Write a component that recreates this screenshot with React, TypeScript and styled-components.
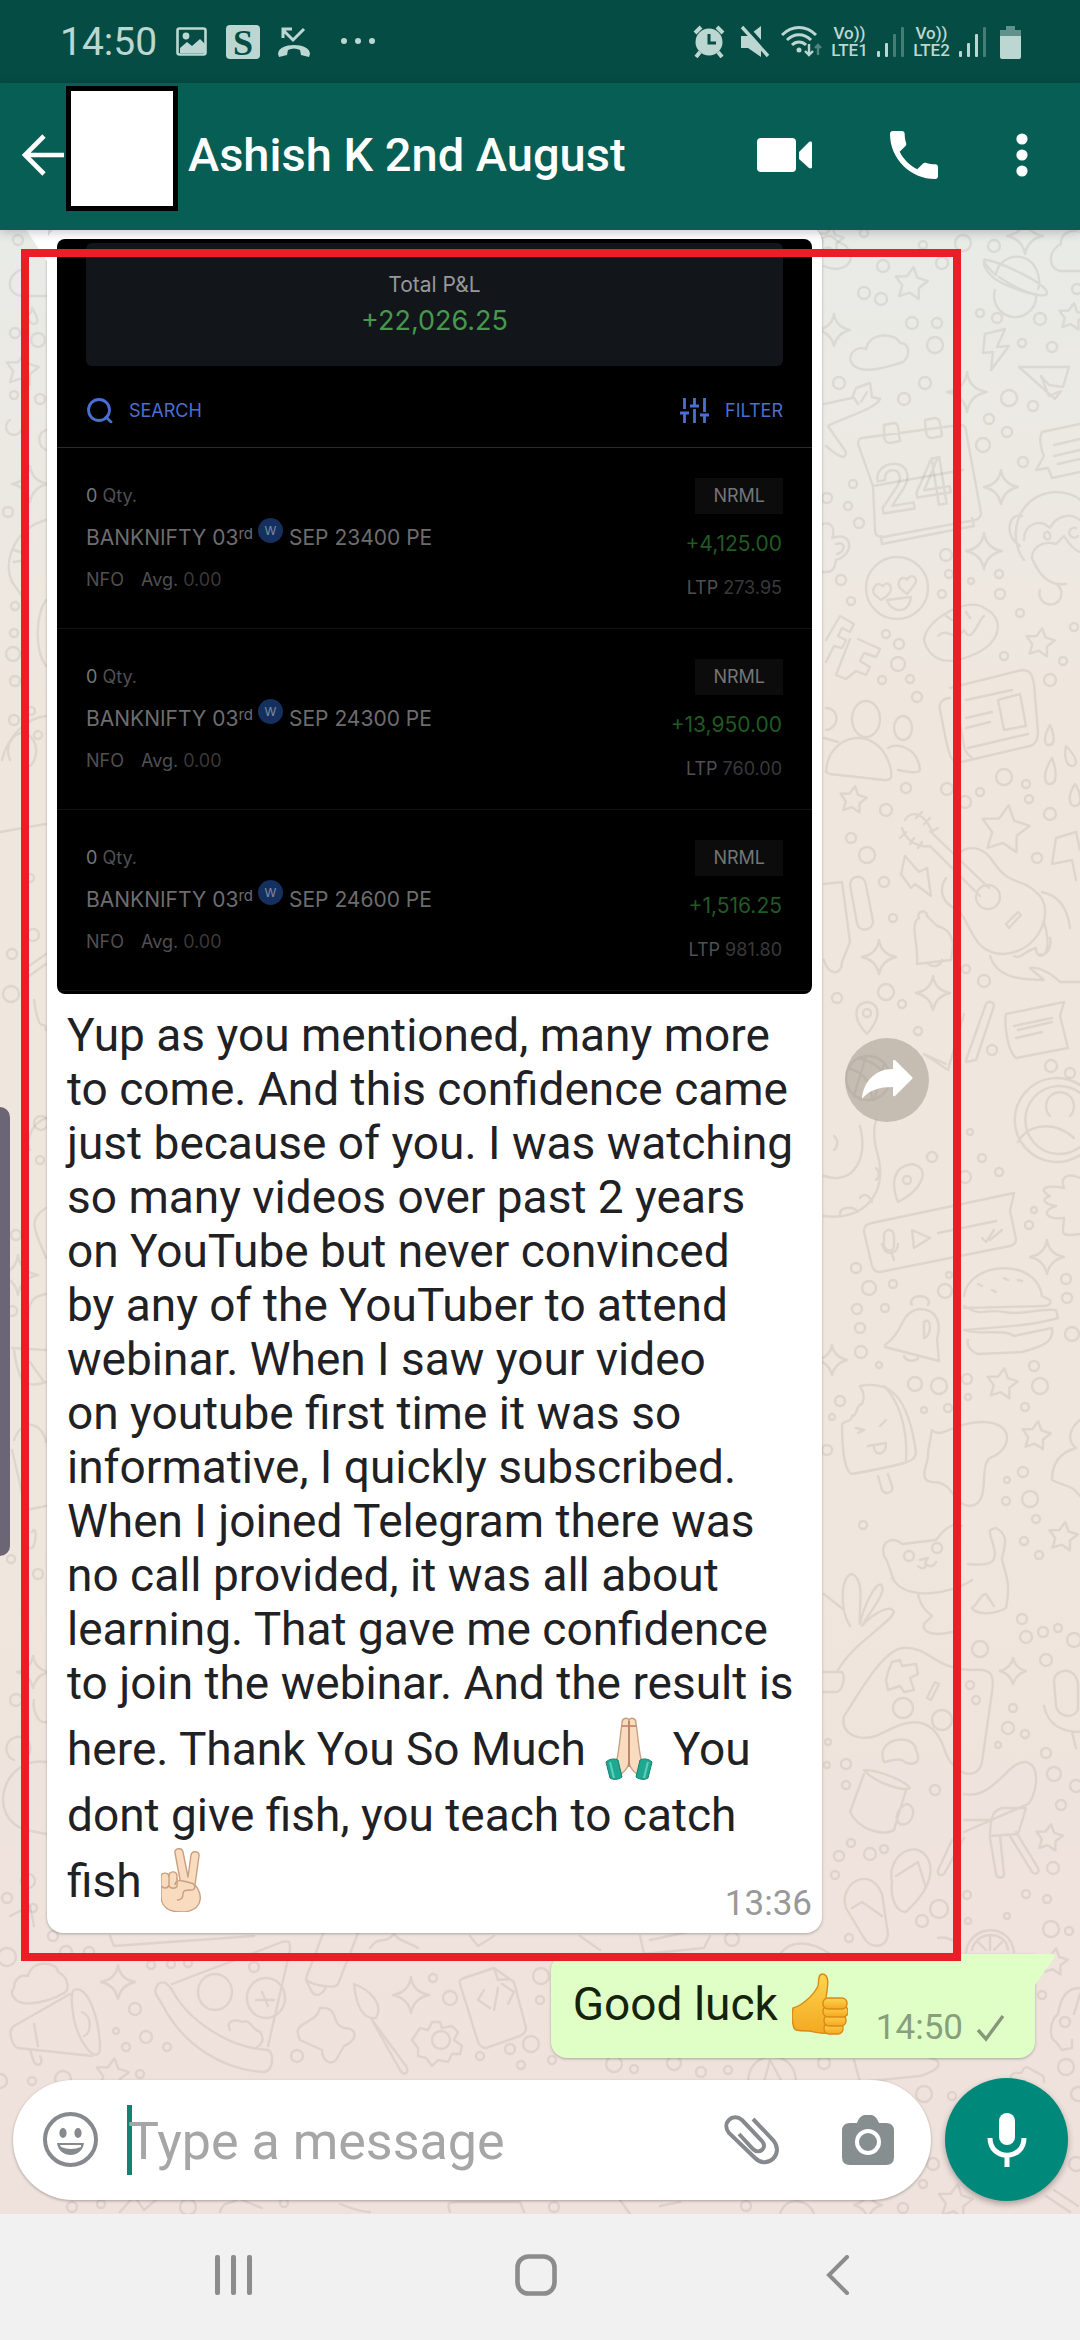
import React from 'react';
import styled, { createGlobalStyle } from 'styled-components';

const GlobalStyle = createGlobalStyle`
  * { box-sizing: border-box; }
  body { margin: 0; background: #f1f1f1; }
  button { border: 0; padding: 0; background: none; font: inherit; color: inherit; cursor: pointer; display: flex; flex: none; }
  svg { display: block; }
`;

const Screen = styled.div`
  min-height: 100vh;
  display: flex;
  flex-direction: column;
  font-family: Roboto, "Noto Sans", sans-serif;
`;

/* ---------- status bar ---------- */
const StatusBar = styled.div`
  height: 83px;
  padding: 0 59px 0 60px;
  display: flex;
  align-items: center;
  justify-content: space-between;
  background: #054d44;
  color: #bcd6d2;
`;
const StatusGroup = styled.div<{ $gap: number }>`
  display: flex;
  align-items: center;
  gap: ${(p) => p.$gap}px;
`;
const Clock = styled.span`
  font-size: 39px;
  line-height: 44px;
`;
const Network = styled.span`
  width: 39px;
  display: flex;
  flex-direction: column;
  align-items: center;
  font-size: 17px;
  line-height: 17px;
  font-weight: 500;
`;

/* ---------- chat header ---------- */
const Header = styled.header`
  position: relative;
  z-index: 2;
  height: 147px;
  padding: 3px 52px 7px 22px;
  display: flex;
  align-items: center;
  background: #075e54;
  color: #fff;
  box-shadow: 0 2px 10px rgba(0, 0, 0, 0.22);
`;
const Avatar = styled.div`
  align-self: flex-start;
  width: 112px;
  height: 125px;
  margin: 0 10px 0 2px;
  border: 5px solid #000;
  background: #fff;
`;
const Title = styled.h1`
  flex: 1;
  margin: 0;
  font-size: 47px;
  line-height: 56px;
  font-weight: 500;
  white-space: nowrap;
`;
const HeaderActions = styled.div`
  display: flex;
  align-items: center;
  gap: 78px;
`;

/* ---------- conversation ---------- */
const Chat = styled.main`
  position: relative;
  flex: 1;
  display: flex;
  flex-direction: column;
  overflow: hidden;
  background: linear-gradient(#e9ebe7 0, #efe7de 24%, #efe6dd 65%, #efe1dc 100%);
`;
const Wallpaper = styled.svg`
  position: absolute;
  inset: 0;
  width: 100%;
  height: 100%;
  fill: none;
  stroke: rgba(92, 84, 70, 0.11);
  stroke-width: 2.4;
  stroke-linecap: round;
  stroke-linejoin: round;
`;
const IncomingRow = styled.div`
  position: relative;
  z-index: 1;
  display: flex;
  align-items: center;
  gap: 23px;
  margin-top: -4px;
  padding-left: 47px;
`;
const Bubble = styled.article`
  position: relative;
  flex: 0 1 775px;
  padding: 13px 10px 9px;
  border-radius: 16px;
  background: #fff;
  box-shadow: 0 1px 3px rgba(0, 0, 0, 0.28);
`;
const Tail = styled.svg<{ $side: 'left' | 'right' }>`
  position: absolute;
  top: 0;
  ${(p) => p.$side}: -21px;
`;
const RedFrame = styled.div`
  position: absolute;
  top: 23px;
  bottom: -28px;
  left: 21px;
  right: 119px;
  border: 8px solid #e91e27;
  pointer-events: none;
`;
const ForwardButton = styled.button`
  width: 84px;
  height: 84px;
  border-radius: 50%;
  background: rgba(135, 125, 115, 0.4);
  align-items: center;
  justify-content: center;
`;
const EdgeHandle = styled.div`
  position: absolute;
  z-index: 1;
  left: 0;
  top: 877px;
  width: 10px;
  height: 449px;
  border-radius: 0 10px 10px 0;
  background: #6b6575;
`;

/* ---------- trading card ---------- */
const Card = styled.section`
  padding: 4px 0 3px;
  border-radius: 8px;
  background: #000;
  overflow: hidden;
  font-family: Inter, "Liberation Sans", sans-serif;
  font-size: 18px;
  line-height: 24px;
  color: #505052;
`;
const Totals = styled.div`
  margin: 0 29px;
  height: 123px;
  padding-top: 28px;
  border-radius: 6px;
  background: #12161a;
  text-align: center;
`;
const TotalLabel = styled.div`
  font-size: 21px;
  line-height: 28px;
  color: #96989b;
`;
const TotalValue = styled.div`
  margin-top: 4px;
  font-size: 27px;
  line-height: 36px;
  color: #47984c;
`;
const Toolbar = styled.div`
  height: 82px;
  padding: 8px 29px 0;
  border-bottom: 1px solid #2a2a2a;
  display: flex;
  align-items: center;
  justify-content: space-between;
  color: #4a6fd0;
`;
const ToolButton = styled.button`
  align-items: center;
  gap: 16px;
`;
const Position = styled.div`
  height: 181px;
  padding: 30px 29px 0;
  border-bottom: 1px solid #131313;
  display: flex;
  justify-content: space-between;
`;
const PositionInfo = styled.div`
  padding-top: 6px;
  display: flex;
  flex-direction: column;
  gap: 16px;
`;
const PositionFigures = styled.div`
  display: flex;
  flex-direction: column;
  align-items: flex-end;
  gap: 16px;
`;
const Strong = styled.span`
  color: #777;
`;
const Instrument = styled.div`
  display: flex;
  align-items: center;
  font-size: 21px;
  line-height: 28px;
  color: #6d6d6f;
  white-space: nowrap;
`;
const Ordinal = styled.span`
  align-self: flex-start;
  font-size: 15px;
  line-height: 20px;
  color: #6d6d6f;
`;
const WeekBadge = styled.span`
  align-self: flex-start;
  width: 25px;
  height: 25px;
  margin: -6px 6px 0 5px;
  border-radius: 50%;
  background: #15305e;
  color: #7f8ba3;
  font-size: 12px;
  line-height: 25px;
  text-align: center;
`;
const Exchange = styled.div`
  display: flex;
  gap: 17px;
`;
const Dim = styled.span`
  color: #39393a;
`;
const Product = styled.div`
  padding: 0 18px;
  background: #0c0c0c;
  line-height: 36px;
  color: #757575;
`;
const Gain = styled.div`
  padding-right: 1px;
  font-size: 21px;
  line-height: 28px;
  color: #205a23;
`;
const Ltp = styled.div`
  padding-right: 1px;
  line-height: 28px;
`;

/* ---------- message text ---------- */
const Message = styled.p`
  margin: 0;
  padding: 14px 10px 0;
  font-size: 46px;
  line-height: 54px;
  color: #1f2124;
`;
const Line = styled.span`
  display: block;
  white-space: nowrap;
`;
const TallLines = styled.span`
  display: block;
  padding-top: 6px;
  line-height: 66px;
`;
const Emoji = styled.svg`
  display: inline-block;
  margin: 0 8px;
  vertical-align: -15px;
`;
const Meta = styled.div<{ $own?: boolean }>`
  display: flex;
  justify-content: flex-end;
  align-items: center;
  gap: 13px;
  margin-top: ${(p) => (p.$own ? 0 : -30)}px;
  font-size: 35px;
  line-height: 40px;
  color: ${(p) => (p.$own ? '#87a07a' : '#999')};
`;
const OwnBubble = styled.article`
  position: relative;
  align-self: flex-end;
  display: flex;
  align-items: flex-end;
  gap: 28px;
  height: 104px;
  margin: 21px 45px 0 0;
  padding: 0 30px 10px 22px;
  border-radius: 16px 0 16px 16px;
  background: #e0ffc7;
  box-shadow: 0 1px 3px rgba(0, 0, 0, 0.28);
`;
const OwnText = styled.div`
  align-self: flex-start;
  margin-top: 19px;
  display: flex;
  align-items: center;
  gap: 14px;
  font-size: 46px;
  line-height: 54px;
  color: #14240c;
`;

/* ---------- composer ---------- */
const Composer = styled.form`
  position: relative;
  margin-top: auto;
  padding: 0 12px 13px 13px;
  display: flex;
  align-items: center;
  gap: 14px;
`;
const Pill = styled.div`
  flex: 1;
  min-width: 0;
  height: 120px;
  padding: 0 37px 0 29px;
  border-radius: 60px;
  background: #fff;
  display: flex;
  align-items: center;
  box-shadow: 0 1px 3px rgba(0, 0, 0, 0.3);
`;
const Caret = styled.span`
  flex: none;
  width: 5px;
  height: 70px;
  margin: 0 -4px 0 28px;
  background: #128372;
`;
const Field = styled.input`
  flex: 1;
  min-width: 0;
  padding: 4px 0 0;
  border: 0;
  outline: 0;
  background: none;
  font: 52px/60px Roboto, "Noto Sans", sans-serif;
  color: #222;
  &::placeholder { color: #a6a6a6; opacity: 1; }
`;
const PillActions = styled.div`
  flex: none;
  display: flex;
  align-items: center;
  gap: 62px;
`;
const MicButton = styled.button`
  width: 123px;
  height: 123px;
  border-radius: 50%;
  background: #00897b;
  align-items: center;
  justify-content: center;
  box-shadow: 0 3px 6px rgba(0, 0, 0, 0.3);
`;

/* ---------- system navigation ---------- */
const NavBar = styled.nav`
  height: 126px;
  padding: 0 213px 4px 205px;
  display: flex;
  align-items: center;
  justify-content: space-between;
  background: #f1f1f1;
`;
const NavButton = styled.button`
  width: 58px;
  height: 58px;
  align-items: center;
  justify-content: center;
`;

const positions = [
  { strike: 'SEP 23400 PE', gain: '+4,125.00', ltp: '273.95' },
  { strike: 'SEP 24300 PE', gain: '+13,950.00', ltp: '760.00' },
  { strike: 'SEP 24600 PE', gain: '+1,516.25', ltp: '981.80' },
];

const lines = [
  'Yup as you mentioned, many more',
  'to come. And this confidence came',
  'just because of you. I was watching',
  'so many videos over past 2 years',
  'on YouTube but never convinced',
  'by any of the YouTuber to attend',
  'webinar. When I saw your video',
  'on youtube first time it was so',
  'informative, I quickly subscribed.',
  'When I joined Telegram there was',
  'no call provided, it was all about',
  'learning. That gave me confidence',
  'to join the webinar. And the result is',
];

/* ---------- wallpaper drawing ---------- */
const dots: number[][] = [
  [883, 266, 6], [864, 293, 6], [881, 299, 6], [942, 263, 6], [923, 245, 4], [963, 243, 8], [994, 246, 6], [864, 233, 4],
  [980, 313, 4], [997, 318, 5], [1040, 319, 6], [912, 323, 6], [937, 323, 5], [935, 345, 8], [1022, 343, 4], [1052, 347, 5],
  [839, 383, 6], [925, 383, 6], [904, 399, 6], [1009, 398, 8], [1033, 406, 5], [989, 419, 5], [1007, 432, 5], [983, 445, 7],
  [1023, 462, 5], [853, 484, 4], [848, 506, 4], [859, 523, 5], [827, 498, 5], [946, 555, 6], [949, 574, 4], [999, 574, 4],
  [971, 581, 3], [1000, 594, 5], [841, 580, 5], [851, 601, 4], [942, 594, 4], [886, 634, 4], [1020, 613, 4], [1077, 289, 5],
  [899, 644, 5], [898, 664, 7], [882, 680, 4], [910, 679, 4], [917, 697, 5], [1004, 656, 4], [1063, 661, 4], [1050, 680, 6],
  [1074, 627, 4], [906, 788, 5], [947, 789, 6], [980, 792, 4], [1004, 777, 8], [1026, 784, 4], [1029, 799, 4], [1050, 814, 6],
  [965, 802, 6], [886, 810, 6], [851, 838, 5], [867, 855, 8], [884, 882, 5], [893, 918, 4], [1037, 858, 5], [966, 969, 4],
  [984, 981, 6], [886, 992, 8], [837, 998, 5], [902, 1004, 4], [918, 1031, 4], [992, 1050, 5], [1051, 1066, 6], [1070, 1073, 5],
  [932, 1157, 5], [982, 1158, 4], [999, 1172, 4], [965, 1177, 6], [970, 1132, 3], [1029, 1225, 4], [1034, 1210, 3], [856, 1268, 5],
  [869, 1288, 7], [893, 1284, 4], [945, 1291, 7], [949, 1275, 3], [857, 1309, 5], [885, 1308, 4], [860, 1328, 5], [861, 1352, 6],
  [879, 1365, 3], [915, 1384, 7], [939, 1386, 8], [924, 1410, 3], [840, 1401, 5], [832, 1417, 3], [948, 1408, 4], [1066, 1279, 5],
  [1067, 1298, 5], [1072, 1334, 7], [1034, 1366, 5], [1040, 1386, 8], [967, 1379, 5], [968, 1397, 3], [1025, 1407, 4], [1023, 1472, 5],
  [1007, 1480, 3], [1006, 1501, 4], [1030, 1499, 8], [1036, 1519, 4], [1024, 1541, 4], [1039, 1555, 4], [863, 1525, 4], [827, 1450, 5],
  [1022, 1619, 5], [1026, 1637, 6], [1043, 1632, 5], [1058, 1628, 4], [1074, 1640, 7], [980, 1649, 8], [1046, 1660, 6], [1013, 1708, 4],
  [1008, 1728, 6], [1025, 1734, 4], [998, 1745, 3], [1046, 1753, 5], [1054, 1774, 7], [1076, 1786, 6], [1061, 1805, 5], [1053, 1868, 6],
  [846, 1764, 5], [828, 1742, 3], [827, 1765, 3], [846, 1785, 4], [935, 1790, 5], [851, 1843, 4], [839, 1856, 5], [870, 1854, 6],
  [884, 1849, 4], [835, 1875, 4], [1026, 1894, 4], [1047, 1899, 4], [967, 1895, 4], [939, 1909, 9], [922, 1921, 6],
  [968, 1921, 3], [1007, 1916, 3], [1051, 1929, 8], [1069, 1931, 4], [849, 1938, 4], [732, 1939, 7], [1042, 1995, 4], [614, 2064, 8],
  [634, 2069, 4], [701, 2072, 5], [728, 2070, 4], [824, 2063, 6], [674, 2063, 7], [552, 2060, 4], [1066, 2067, 8], [924, 2094, 8],
  [952, 2096, 4], [933, 2164, 6], [923, 2184, 4], [903, 2208, 5], [746, 2206, 5], [1078, 2094, 7], [1076, 2164, 7],
  [18, 240, 5], [15, 333, 5], [38, 340, 7], [14, 395, 4], [40, 399, 5], [8, 512, 5], [15, 606, 4], [14, 633, 4],
  [13, 654, 7], [15, 681, 5], [31, 711, 4], [14, 720, 5], [38, 735, 4], [30, 878, 4], [33, 935, 6], [12, 954, 5], [11, 994, 8],
  [16, 1235, 5], [41, 1123, 7], [40, 1160, 4], [12, 1311, 5], [11, 1559, 4], [38, 1574, 5], [16, 1700, 6], [28, 1881, 7],
  [7, 1898, 5], [33, 1908, 4], [53, 1936, 5], [7, 1957, 9], [66, 1952, 6], [89, 1952, 5], [151, 1965, 4], [171, 1964, 4], [188, 1963, 4],
  [254, 1967, 5], [433, 1978, 4], [450, 1998, 7], [540, 2000, 4], [541, 1976, 8], [135, 2009, 6], [116, 2031, 3], [146, 2037, 6],
  [126, 2047, 4], [167, 2047, 4], [297, 2056, 6], [32, 2081, 4], [63, 2079, 8], [140, 2074, 4], [480, 2056, 4], [510, 2049, 5],
  [531, 2044, 8], [521, 2065, 4], [72, 2207, 5], [101, 2204, 4], [188, 2207, 8], [284, 2203, 4], [554, 2207, 5], [0, 2081, 7],
];
const stars: number[][] = [
  [911, 284, 17], [1072, 317, 14], [1040, 643, 15], [853, 800, 14], [1005, 830, 25], [1002, 1384, 16], [1036, 1436, 15],
  [1063, 1537, 15], [1049, 1838, 14], [1054, 1962, 14], [955, 2202, 18], [112, 2075, 17], [22, 370, 17], [830, 240, 14],
];
const sparks: number[][] = [
  [834, 330, 16], [967, 392, 20], [1001, 487, 17], [984, 551, 18], [1025, 236, 18], [879, 957, 17], [933, 993, 17],
  [1047, 1257, 17], [1013, 1671, 13], [118, 1982, 17], [411, 1995, 18], [30, 484, 18], [18, 1275, 20], [832, 1360, 15], [33, 1672, 16], [868, 2205, 14],
];
const starPath = (cx: number, cy: number, r: number) => {
  const pts = Array.from({ length: 10 }, (_, i) => {
    const a = -Math.PI / 2 + 0.15 + (i * Math.PI) / 5;
    const k = i % 2 ? r * 0.52 : r;
    return `${(cx + k * Math.cos(a)).toFixed(1)} ${(cy + k * Math.sin(a)).toFixed(1)}`;
  });
  return `M${pts.join('L')}Z`;
};
const sparkPath = (x: number, y: number, r: number) =>
  `M${x} ${y - r}Q${x + 2} ${y - 3} ${x + r} ${y}Q${x + 3} ${y + 3} ${x} ${y + r}Q${x - 3} ${y + 3} ${x - r} ${y}Q${x - 2} ${y - 3} ${x} ${y - r}Z`;

const doodles = [
  // clouds
  'M853 365c-8-10 4-20 13-16 4-18 30-16 34-6 12 0 10 18 0 20-14 4-36 12-47 2Z',
  'M1080 232c-12-4-20 4-19 12-12 6-14 22-2 27h22M824 266c16 8 30-2 26-12-2-12-12-10-14-14-6-8-12-2-14-2',
  // planet
  'M995 290a21 21 0 1 0 41 4M996 275a21 21 0 0 1 40-6c4 8 4 16 2 20M996 275c-10-8-16-18-9-15 18 4 60 24 60 33 0 8-40-6-52-14-10-8-14-18-9-19M999 277c14 10 30 16 38 18',
  // bolts
  'M985 334l20-5-8 18 12-1-18 24 2-18-10 1ZM905 856l14 16 8-4 4 28-16-12-4 4-10-14ZM1056 838l20-6 4 18M1056 838l-4 26 20-4 4 20',
  // paper plane
  'M1019 367h50l-6 20-14-2-8-9 8 20 12-5-6 8-36-32Z',
  // crayon and scissors
  'M824 404l28-6 4-10 14-5 2 14 8 2c-4 10-40 20-52 27l18 26c0 8-6 6-20-6M861 402l6-10M854 398l4 6',
  // calendar
  'M862 438l98-13c4 0 6 2 6 6l15 82c0 4-2 6-6 7l-92 17c-6 0-8-2-8-8l-2-43-15-42c0-4 2-6 4-6ZM873 486l90-16M884 425l10-2c4 0 4 2 6 18l-10 2c-6 0-6-4-6-18ZM925 420l10-2c4 0 5 2 7 18l-10 2c-6 0-6-4-7-18ZM881 536l1 8 92-18-2-8',
  // mug
  'M822 524c14-4 12 12 10 14 20-8 24 16 4 22-2 14-8 12-14 12M836 544c10-4 10 8 1 10',
  // note
  'M1080 424l-38 8c-4 8 0 20 2 24l-8 14 12-2 4 10 28-6M1054 445l26-6M1054 456l26-6M1058 464l22-5',
  // monkey
  'M1024 560c-16-20-10-64 30-68 14 0 22 4 26 8M1022 516c-12-4-20 18-2 30M1024 540c0-16 16-22 26-12 6-12 20-16 30-8M1032 558c0-10 10-18 24-14l8-8c6 10 10 14 16 16M1032 558c8 20 20 28 34 26M1050 534c2 6-4 8-6 2 0-4 4-6 6-2ZM1076 528a5 5 0 1 0 2 8M1040 590a11 11 0 1 0 16-6',
  // heart-eyed face
  'M928 588a31 31 0 1 1-62 0a31 31 0 1 1 62 0ZM874 588c4-8 8-2 9-2 4-6 10 0 7 6-2 4-6 6-9 8-4-4-10-6-7-12ZM899 582c2-6 8-4 8-2 4-8 12-2 8 4l-8 10c-4-4-10-6-8-12ZM887 600l24-3c-2 18-20 16-24 3Z',
  // doughnut
  'M924 640c2-22 46-44 60-32 22 10 18 36-14 48-28 12-42 0-46-16ZM938 636c10-10 16 8 26-6 8 16 14-10 20-14M946 616l6 4M966 612l4 6',
  // toys
  'M826 640l14-24 14 8-4 8-8-4-4 8 8 4-4 8-8-2-8 16M858 639l22 10-4 8-12-4-4 8 10 6-4 8-10-4-10 8-10-4 14-36',
  // newspaper
  'M950 688l72-18c8 0 10 4 12 14l4 48c0 8-2 12-8 14l-60 14c-20 6-20-2-24-20l-6-30c-2-8 4-12 10-12M954 694l8 40c2 16 4 20 10 24M966 700l46-10M966 718l26-6M966 728l24-6M968 748l60-14M998 700l22-6 6 32-22 4Z',
  // people
  'M880 719a14 18 0 1 1-28 0a14 18 0 1 1 28 0ZM912 728a9 12 0 1 1-18 0a9 12 0 1 1 18 0ZM826 772c2-40 52-48 64-6 4 16-2 14-6 14l-54-6ZM888 748c10-6 30 0 32 22-2 4-10 2-22 0M826 708c14 0 14 20 0 22M824 738l14 4',
  // drops
  'M1050 725c6 14 4 20-1 20s-6-8 1-20ZM1052 758c6 16 4 26-2 26s-8-10 2-26ZM1066 746c12 12 12 20 6 20s-8-10-6-20ZM1075 784c8 12 6 22 0 22s-8-10 0-22Z',
  // guitar
  'M905 820c6-10 20-8 28 14l56 54M902 828c4 14 18 20 28 18l50 50M906 832l-6 6M914 838l-4 6M922 842l-4 6M916 818l6-6M924 824l6-6M930 832l8-4M946 878c-8 12-4 26 12 32 14 14 14 44 46 44 34-2 50-40 36-58-20-22-28-6-48-36-16-22-40-10-38 8M1000 897a12 12 0 1 1-24 0a12 12 0 1 1 24 0ZM1006 924l12-12 3 3-12 13ZM1042 892c20 4 26 20 28 36M1044 922c6 20 4 36-4 32M1014 956c6 4 12-6 22-8 0 16 18 4 14-10M990 956c6 20 26 24 54 24l-14-12c6-2 20 4 30 14h20',
  // pill, bells, pin
  'M850 885c0-10 14-12 16 0l7 36c0 10-14 12-16 2ZM824 884l18-2 8 60-8 20c0 14-14 14-18-2',
  'M919 918c-4-6 8-10 8-2l10 10c10 2 16 10 16 20l-2 14-34 4c2-20-8-40 2-46M928 964c6 4 12 2 14-4',
  'M885 1345c20-14 14-32 34-36 20 0 22 16 18 30l2 22-54-14M912 1305a9 6 0 1 1 16 0M924 1322c8-6 8 14 0 16ZM904 1356c2 6 12 6 14 2',
  'M867 1034c-14-14-14-30 0-32 14 2 14 16 0 32ZM871 1013a4 4 0 1 1-8 0a4 4 0 1 1 8 0ZM898 1202c-8-20-4-36 14-38 20 4 10 26-14 38ZM911 1180a4 4 0 1 1-8 0a4 4 0 1 1 8 0Z',
  // pencil and card
  'M966 1060l20-56c2-4 8-2 8 2l-18 54-10 2ZM946 1064l-22-10 24 16 16-56',
  'M1006 1014l58-12-4 14 8 32-52 10c-8-6-12-32-10-44ZM1014 1026l38-8M1016 1038l26-6M1018 1030l34-8',
  // ball
  'M890 1078a22 22 0 1 1-44 0a22 22 0 1 1 44 0ZM848 1068c14 4 24 14 24 32M858 1058c18 4 28 14 30 26M866 1056l-12 40M884 1064l-10 36',
  // profile badge
  'M1080 1085a42 42 0 1 0 0 70M1080 1093a34 34 0 1 0 0 54M1050 1116a14 14 0 1 1 20 0M1018 1142c10-18 36-22 56-4',
  // snake
  'M824 1176c30 10 44-18 36-50M824 1216c40 6 64-24 54-60-6-20-4-30-2-36M834 1150a9 9 0 0 0 0-14M876 1168a8 8 0 0 1 0 12M860 1198c4-6 10-2 12 4M840 1214c0-8 14-8 18-2',
  // voice note
  'M872 1223l142-30-4 18 6 28c0 4-2 6-6 7l-130 26c-5 0-6-2-8-6l-8-34c0-6 2-8 8-9ZM884 1236c0-8 10-8 10 0v10c0 6-8 6-10 0ZM882 1244c4 14 16 10 16 0M892 1254l2 6M912 1230l2 18 16-10ZM938 1233l58-12M982 1238l4 4 8-12M990 1240l12-10',
  // splat
  'M1080 1178c-14-6-20 0-16 10-20-4-26 2-14 8-8 2-8 8 6 10-14 4-12 14 8 12 0 12-8 20 16 16',
  // burger
  'M964 1296c4-34 72-40 78 0l8 4c2 4-2 6-6 6l-80 2M964 1306c20 12 20 2 40 6s30-4 52-2l2 8c-20 6-40 8-94 12M964 1330c14 6 40-2 50 6l38-8c2 14-8 18-30 24l-44 2c-6-2-12-8-10-14M978 1284l4 2M992 1290l4 2M1004 1278l4 2M1018 1280l4 1',
  // lolly
  'M860 1386c30-6 48 10 56 66 0 10-10 12-64 22-8-2-10-30-10-50 4-4 10-2 10-8 6 0 4-12 10-12 4-8 0-14-2-18ZM884 1386c14 14 24 40 22 74M856 1428l8 2-6 3M880 1426l6-6M868 1446l18-3M874 1446c0 12 12 8 12-1M878 1476l4 14c4 6 12 2 10-4l-4-12',
  // puddle
  'M932 1430c10 10 20-8 50-8 34 0 30 28 8 36-12 8 2 46-20 48-20-2-14-24-38-24-16-2-2-20-4-30Z',
  'M1080 1420c-10 8-14 20-4 28-14 4-24 14-24 32 10 6 20 4 28 16',
  // cat
  'M894 1580c-6-14-6-20-10-24-4-16 10-20 18-12l34-4c10-14 20-18 26-14M892 1578c14 24 60 16 80 2M918 1594c4 16 10 18 14 22l-8 8c-2 10 12 12 28 8M968 1564c20 2 30 0 26-16-4-16-8-18 2-20 16 8 6 24 6 32 6 20 8 26 4 48-14 8-30 6-34 0 8-6 8-14 14-14l8 12M914 1556a5 5 0 1 1-10 0a5 5 0 1 1 10 0ZM942 1548a5 5 0 1 1-10 0a5 5 0 1 1 10 0ZM920 1560l8-2-3 5M918 1566c4 4 8 2 8-2 4 4 8 2 10-2',
  // plant
  'M850 1626c-10-16-10-50 2-52 14 6 6 36 8 50 4-20 18-46 22-38 4 8-14 28-20 40 12-14 30-22 32-14-4 12-40 30-56 58M824 1594l20 16M824 1672h18c4 6 0 20-6 20h-12',
  // gamepad
  'M844 1716c10-14 36-64 58-68 30-2 30 22 72 22 20-2 20 8 18 22l-10 70c-4 20-30 14-38-14-16-44-50-20-68-12-20 6-36-4-32-20ZM888 1672l4-10 8-2 2 6 14-2 2 10-8 4 4 12-10 2-4-6-12 4-2-10ZM913 1708a10 10 0 1 1-20 0a10 10 0 1 1 20 0ZM952 1720a10 10 0 1 1-20 0a10 10 0 1 1 20 0ZM927 1698l8-16 4 2-8 16ZM974 1685a4 4 0 1 1-8 0a4 4 0 1 1 8 0ZM980 1700a4 4 0 1 1-8 0a4 4 0 1 1 8 0Z',
  // steaming cup
  'M864 1770c14 0 40 10 46 18-4 4-34-4-46-18ZM864 1774l-14 38c10 20 36 24 44 18l12-40M906 1804c12 0 8 24-6 20-6-4-4-14 6-20M884 1762c-10-24 30-30 32-12 8 16-8 16-14 10-8-2-14 2-18 2',
  // grill
  'M964 1794c30 6 44-34 62-32 16 4 10 34 2 42l-64 28M990 1836c0-20 4-26 12-28h24l-8 26ZM964 1820h26M990 1838l6 36c2 6 8 4 8 0l-4-38M1010 1836l22 36c4 4 8 0 6-4l-22-36M964 1838l-20 36c-6 4-8-2-4-8l12-26',
  // microphone
  'M1054 1680c2-12 22-14 24 4v26c-6 10-20 6-22-4ZM1044 1706c4 20 20 26 36 26M1072 1732l4 16',
  // sandals
  'M892 1882c-6-30 30-46 38-18 4 22-16 40-24 48-10 0-16-14-14-30ZM896 1876l22-14 8 26M846 1908c-8-24 24-44 36-14l6 40c-2 16-18 14-24 4ZM852 1908l10-6 20 14',
  // slice, crown and wheel
  'M938 1938c6-2 16 2 20 6M966 1952c4-28 44-30 48 0M972 1950c4-20 34-20 36 0M990 1936v14M978 1942l8 8M1002 1942l-8 8',
  // car
  'M1080 1988c-16 0-20 14-22 26-8 6-10 24-2 28l6 8 10-2v-8M1074 2014l6-20M1070 2022a5 5 0 1 1-10 0a5 5 0 1 1 10 0Z',
  // peace badge and bottle
  'M748 2082c0-34 48-34 48 0M770 2060l-6 22M770 2060l12 22M854 2060l6 22 60-6c26-8 20-16 10-18',
  'M1010 2078c4-10 10-2 12-6 4-10 8-2 14 0 6 4 8 2 8 10M1046 2196l24 16M1054 2190l24 16',
  // lower-left megaphone and cloud
  'M14 1988c0-10 8-14 14-12 4-18 30-14 30-4 12 6 12 20 4 22-10 6-36 14-46 6-4-4-6-8-2-12ZM74 1990c14-6 26 30 26 60-4 14-20-6-26-30-2-14-4-26 0-30ZM70 1994l-56 32c-8 6 0 22 4 22l74 8M34 2024l4 22M30 2050l4 12c4 6 10 2 6-6M82 2012c10 4 10 20 2 24',
  // pizza
  'M158 1984c-6 10 0 12 4 20 20 40 60 66 102 68 10-2 10-18 4-22-40-2-80-30-96-60-4-6-8-10-14-6ZM172 1984l110-42c8-2 8 0 8 8l-22 96M232 1992a17 18 0 1 1-34 0a17 18 0 1 1 34 0ZM285 1998a19 20 0 1 1-38 0a19 20 0 1 1 38 0ZM256 2000h18M262 1992l6 14M230 2030c-6-12 10-10 12-8 8-4 10 8 18 10 6 8 0 14-4 16',
  // glue, milk and brush
  'M326 1926l-20 52c0 6 28 12 32 6l22-56M306 1980l6 12c4 6 12 2 14-6M300 2040c-10-20 16-14 20-32 20-2 10 16 24 20 16 0 12 14 0 18l-8 14c-6 6-14 0-14-10ZM354 1984c16 6 30 20 22 34-14 2-20-14-22-34ZM372 2020l34 46c4 8-2 10-6 4Z',
  // code file
  'M464 1978l30-10 20 14 12 46c0 4-2 6-6 8l-34 12c-4 0-6-2-8-6l-18-58c-1-4 1-5 4-6ZM494 1968l4 12 12-1M484 1990l-6 10 12 8M502 1984l12 8-6 12M498 1988l-4 22',
  // gear
  'M420 2028l8 2 4-8 8 0 2 6 10-2 6 6-4 8 8 6-2 8-8 0-4 8-10-2-6 6-6-8-8-2 0-8-6-8ZM450 2040a9 9 0 1 1-18 0a9 9 0 1 1 18 0Z',
  // objects under the message
  'M110 1936l4 10 140-10M370 1948c10-14 14-2 24-14 6 8 10 6 24 14M470 1936l8 10 16-10M640 1936l4 18 60-6 6-12M650 1940l38-8M580 1936l20 14M780 1954c10-14 30-14 50 0',
  'M120 2212l14-16 10 14 14-12M220 2212c4-14 14-6 18-14 10 4 8 4 24 10M340 2204c10 4 20 8 30 8M450 2212c-4-10 0-10 10-10h60l4 10M620 2200l10 14M660 2206l20-4M780 2214c6-20 30-14 34 0',
  // left edge
  'M20 270c-14 6-14 24 2 26h24M28 315c8-4 0-14 8 0 6 14-10 10-8 0M10 420a8 8 0 1 0 12 6M46 430c-10 4-8 16 0 20M46 520c-30 8-44 40-34 62l10 14M14 550l12 4M14 562l12-2M46 600c-10 14-12 50 0 66M2 760c6-24 24-42 44-44M10 760a14 18 0 1 1 20 6M0 832l46-8M26 978l20-14M26 968l20-14M34 1000c6 40 10 16 12 30',
  'M30 1150c-4-8 0-26 16-32M46 1208c-20 12-10 24 0 50M28 1320c0-24 10-24 18-26M12 1348l34 2M14 1350c4 30 10 40 32 32M30 1362l14 20M14 1440c10-26 30-14 32 2M12 1450l14 60 20-4M32 1532c6-10 4 20-2 16M14 1760a12 12 0 1 1 14-4M46 1762c-44-6-60 56-20 68l20 4M10 1916l20-10 4 20M34 1700c-2 10 4 24 12 22',
];

const WallpaperArt = () => (
  <Wallpaper viewBox="0 230 1080 1984" preserveAspectRatio="xMidYMin slice" aria-hidden="true">
    {dots.map(([x, y, r], i) => <circle key={i} cx={x} cy={y} r={r} />)}
    {stars.map(([x, y, r], i) => <path key={i} d={starPath(x, y, r)} />)}
    {sparks.map(([x, y, r], i) => <path key={i} d={sparkPath(x, y, r)} />)}
    {doodles.map((d, i) => <path key={i} d={d} />)}
    <text x="880" y="514" fontFamily="Roboto, sans-serif" fontWeight="500" fontSize="66" transform="rotate(-9 880 514)">24</text>
  </Wallpaper>
);

/* ---------- emoji ---------- */
const skin = { fill: '#f9dcc0', stroke: '#c99f7f', strokeWidth: 1.4, strokeLinejoin: 'round' as const };
const PrayingHands = () => (
  <Emoji width="48" height="63" viewBox="0 0 48 63" role="img" aria-label="Folded hands">
    <path {...skin} d="M24 3c-2-3-7-2-7 3-2 14-3 28-5 36l-6 6 7 11c6-4 10-7 11-14Z" />
    <path {...skin} d="M24 3c2-3 7-2 7 3 2 14 3 28 5 36l6 6-7 11c-6-4-10-7-11-14Z" />
    <path d="M24 4v46M17 9h14" stroke="#b9805f" strokeWidth="1.6" fill="none" />
    <path d="M1 45c3-3 8-4 12-2l4 17c-4 3-9 3-12 1Z" fill="#1fa891" stroke="#12806d" />
    <path d="M47 45c-3-3-8-4-12-2l-4 17c4 3 9 3 12 1Z" fill="#1fa891" stroke="#12806d" />
    <path d="M5 45l4 16M43 45l-4 16" stroke="#5fd0bb" strokeWidth="2" />
  </Emoji>
);
const VictoryHand = () => (
  <Emoji width="40" height="64" viewBox="0 0 40 64" role="img" aria-label="Victory hand">
    <path {...skin} d="M20 37L14 5c-1-5 7-6 8-1l5 25 3-22c1-5 9-4 8 1l-4 29c4 4 6 11 5 15-1 8-9 12-19 12C8 64 0 59 0 48V29c0-5 7-5 8-1 0-5 8-6 8 0v6Z" />
    <path {...skin} d="M8 28v9c-1 4-7 4-8 0M16 30v8c-1 3-6 3-8 0M14 37c0-4 4-5 8-4l8 2c5 1 5 7 0 7-5 0-8 0-8 4 0 4-2 6-6 6" />
  </Emoji>
);
const ThumbsUp = () => (
  <svg width="56" height="62" viewBox="0 0 56 62" role="img" aria-label="Thumbs up">
    <defs>
      <linearGradient id="thumb" x1="0" y1="0" x2="0" y2="1">
        <stop offset="0" stopColor="#ffd44d" />
        <stop offset="1" stopColor="#f4a822" />
      </linearGradient>
    </defs>
    <g fill="url(#thumb)" stroke="#d98a17" strokeWidth="1.4" strokeLinejoin="round">
      <path d="M1 35c6-1 20-11 25-22 1-5 0-12 4-12 8 0 6 12 4 24l5 10-2 25c-10 1-14-1-20-2-8 0-14 0-15-3-2-6-2-15-1-20Z" />
      <rect x="32" y="50" width="19" height="11" rx="5" />
      <rect x="32" y="42" width="22" height="11" rx="5" />
      <rect x="31" y="33" width="25" height="11" rx="5" />
      <rect x="31" y="25" width="24" height="11" rx="5" />
    </g>
  </svg>
);

/* ---------- icons ---------- */
const Signal = ({ strength }: { strength: number }) => (
  <svg width="27" height="32" viewBox="0 0 27 32" fill="#bcd6d2">
    {[25, 17, 8, 1].map((y, i) => (
      <rect key={y} x={i * 8} y={y} width="3" height={31 - y} rx="1" opacity={i < strength ? 1 : 0.35} />
    ))}
  </svg>
);

export default function App() {
  return (
    <Screen>
      <GlobalStyle />
      <StatusBar>
        <StatusGroup $gap={18}>
          <Clock>14:50</Clock>
          <svg width="33" height="32" viewBox="0 0 33 32">
            <rect x="2.5" y="2.5" width="28" height="26" rx="2" fill="none" stroke="#bcd6d2" strokeWidth="2.6" />
            <circle cx="11" cy="10" r="3.4" fill="#bcd6d2" />
            <path d="M5 22l7-6 5 4 8-7 5 5v9H5Z" fill="#bcd6d2" />
          </svg>
          <svg width="34" height="34" viewBox="0 0 34 34" overflow="visible">
            <rect width="34" height="34" rx="4" fill="#bcd6d2" />
            <text x="17" y="30" textAnchor="middle" fontFamily="Liberation Serif, serif" fontWeight="700" fontSize="36" fill="#054d44">S</text>
          </svg>
          <svg width="32" height="32" viewBox="0 0 32 32" fill="none" stroke="#bcd6d2">
            <path d="M26 3L15 14 5 4M5 12V3h9" strokeWidth="3" />
            <path d="M0 28c0-12 32-12 32 0l-1 3-8-2-1-5c-4-2-8-2-12 0l-1 5-8 2Z" fill="#bcd6d2" stroke="none" />
          </svg>
          <svg width="50" height="34" viewBox="0 0 50 34" fill="#bcd6d2">
            <circle cx="16" cy="16" r="3" /><circle cx="30" cy="16" r="3" /><circle cx="44" cy="16" r="3" />
          </svg>
        </StatusGroup>
        <StatusGroup $gap={8}>
          <svg width="32" height="33" viewBox="0 0 32 33">
            <circle cx="16" cy="17" r="13.5" fill="#bcd6d2" />
            <path d="M2 8l6-6M30 8l-6-6M7 27l-4 5M25 27l4 5" stroke="#bcd6d2" strokeWidth="4" />
            <path d="M16 9v9h7" stroke="#054d44" strokeWidth="3" fill="none" />
          </svg>
          <svg width="40" height="34" viewBox="0 0 40 34">
            <path d="M8 11h7l13-10v31L15 23H8Z" fill="#bcd6d2" />
            <path d="M12 0l26 29" stroke="#054d44" strokeWidth="4" />
            <path d="M9 2l26 29" stroke="#bcd6d2" strokeWidth="3.4" />
          </svg>
          <svg width="41" height="33" viewBox="0 0 41 33" fill="none" stroke="#bcd6d2" strokeWidth="3">
            <path d="M1 10c10-10 24-10 34 0M6 15c7-7 17-7 24 0M11 20c4-4 10-4 14 0" />
            <circle cx="18" cy="25" r="2.5" fill="#bcd6d2" stroke="none" />
            <path d="M28 19v10M24 26l4 4 4-4" strokeWidth="2.4" />
            <path d="M37 30V20M34 23l3-3 3 3" strokeWidth="2.4" opacity="0.4" />
          </svg>
          <Network><span>Vo))</span><span>LTE1</span></Network>
          <Signal strength={2} />
          <Network><span>Vo))</span><span>LTE2</span></Network>
          <Signal strength={3} />
          <svg width="27" height="34" viewBox="0 0 27 34" fill="#bcd6d2">
            <path d="M12 1h9v4h6v7H6V5h6Z" opacity="0.5" />
            <path d="M6 11h21v21q0 2-2 2H8q-2 0-2-2Z" />
          </svg>
        </StatusGroup>
      </StatusBar>

      <Header>
        <button aria-label="Back">
          <svg width="42" height="42" viewBox="0 0 42 42" fill="none" stroke="#fff" strokeWidth="4.6">
            <path d="M42 21H3M22 2L3 21l19 19" />
          </svg>
        </button>
        <Avatar />
        <Title>Ashish K 2nd August</Title>
        <HeaderActions>
          <button aria-label="Video call">
            <svg width="56" height="34" viewBox="0 0 56 34" fill="#fff">
              <rect x="1" width="39" height="34" rx="4" />
              <path d="M43 14L53 4c2-1 3 0 3 1v24c0 1-1 2-3 1L43 21Z" />
            </svg>
          </button>
          <button aria-label="Voice call">
            <svg width="48" height="48" viewBox="3 3 18 18" fill="#fff">
              <path d="M6.62 10.79c1.44 2.83 3.76 5.14 6.59 6.59l2.2-2.2c.27-.27.67-.36 1.02-.24 1.12.37 2.33.57 3.57.57.55 0 1 .45 1 1V20c0 .55-.45 1-1 1-9.39 0-17-7.61-17-17 0-.55.45-1 1-1h3.5c.55 0 1 .45 1 1 0 1.25.2 2.45.57 3.57.11.35.03.74-.25 1.02l-2.2 2.2z" />
            </svg>
          </button>
          <button aria-label="More options">
            <svg width="12" height="44" viewBox="0 0 12 44" fill="#fff">
              <circle cx="6" cy="6" r="5.6" /><circle cx="6" cy="22" r="5.6" /><circle cx="6" cy="38" r="5.6" />
            </svg>
          </button>
        </HeaderActions>
      </Header>

      <Chat>
        <WallpaperArt />
        <IncomingRow>
          <Bubble>
            <Tail $side="left" width="22" height="37" viewBox="0 0 22 37"><path d="M3 0h19v37L1 5Q-1 0 3 0Z" fill="#fff" /></Tail>
            <Card>
              <Totals>
                <TotalLabel>Total P&amp;L</TotalLabel>
                <TotalValue>+22,026.25</TotalValue>
              </Totals>
              <Toolbar>
                <ToolButton>
                  <svg width="27" height="25" viewBox="0 0 27 25" fill="none" stroke="#4a6fd0" strokeWidth="2.8" strokeLinecap="round">
                    <circle cx="13" cy="12" r="10.5" /><path d="M20 19l5 5" />
                  </svg>
                  SEARCH
                </ToolButton>
                <ToolButton>
                  <svg width="29" height="25" viewBox="0 0 29 25" fill="none" stroke="#4a6fd0" strokeWidth="2.8">
                    <path d="M4.500 0v11M4.500 15v10M0 15h9M14.500 0v7M14.500 11v14M10 8h9M24.500 0v14M24.500 17v8M20 17h9" />
                  </svg>
                  FILTER
                </ToolButton>
              </Toolbar>
              {positions.map((p) => (
                <Position key={p.strike}>
                  <PositionInfo>
                    <div><Strong>0</Strong> Qty.</div>
                    <Instrument>
                      BANKNIFTY 03<Ordinal>rd</Ordinal><WeekBadge>W</WeekBadge>{p.strike}
                    </Instrument>
                    <Exchange><span>NFO</span><span>Avg. <Dim>0.00</Dim></span></Exchange>
                  </PositionInfo>
                  <PositionFigures>
                    <Product>NRML</Product>
                    <Gain>{p.gain}</Gain>
                    <Ltp>LTP <Dim>{p.ltp}</Dim></Ltp>
                  </PositionFigures>
                </Position>
              ))}
            </Card>
            <Message>
              {lines.map((l) => <Line key={l}>{l}</Line>)}
              <TallLines>
                <Line>here. Thank You So Much <PrayingHands /> You</Line>
                <Line>dont give fish, you teach to catch</Line>
                <Line>fish <VictoryHand /></Line>
              </TallLines>
            </Message>
            <Meta>13:36</Meta>
          </Bubble>
          <ForwardButton aria-label="Forward">
            <svg width="52" height="40" viewBox="0 0 52 40" fill="#fff">
              <path d="M32 1q0-2 2-1l17 17q1 1 0 2L34 36q-2 1-2-1v-8C18 27 8 30 1 39 2 22 14 9 32 9Z" />
            </svg>
          </ForwardButton>
          <RedFrame />
        </IncomingRow>
        <OwnBubble>
          <Tail $side="right" width="22" height="31" viewBox="0 0 22 31"><path d="M0 0h19q3 1 1 4L1 31H0Z" fill="#e0ffc7" /></Tail>
          <OwnText>Good luck <ThumbsUp /></OwnText>
          <Meta $own>
            14:50
            <svg width="29" height="28" viewBox="0 0 29 28" fill="none" stroke="#85997a" strokeWidth="3.4"><path d="M2 16l8 9L27 2" /></svg>
          </Meta>
        </OwnBubble>
        <EdgeHandle />
        <Composer onSubmit={(e) => e.preventDefault()}>
          <Pill>
            <button type="button" aria-label="Emoji">
              <svg width="57" height="57" viewBox="0 0 57 57">
                <circle cx="28.500" cy="28.500" r="25.500" fill="none" stroke="#86898d" strokeWidth="4" />
                <ellipse cx="21" cy="22" rx="3.600" ry="5" fill="#86898d" />
                <ellipse cx="36" cy="22" rx="3.600" ry="5" fill="#86898d" />
                <path d="M15 32h27c-2 16-25 16-27 0Z" fill="#86898d" />
                <path d="M18 34h21v2q-10 4-20 0Z" fill="#fff" />
              </svg>
            </button>
            <Caret />
            <Field type="text" placeholder="Type a message" aria-label="Type a message" />
            <PillActions>
              <button type="button" aria-label="Attach">
                <svg width="56" height="50" viewBox="0 0 56 50" fill="none" stroke="#86898d" strokeWidth="4" strokeLinecap="butt">
                  <path d="M29 4l20 21c12 14-6 30-18 18L5 18C-3 8 9-3 18 5l20 21c6 7-3 14-9 8L15 19" />
                </svg>
              </button>
              <button type="button" aria-label="Camera">
                <svg width="52" height="50" viewBox="0 0 52 50">
                  <path d="M8 8h7c2-5 4-7 7-8h8c3 1 5 3 7 8h7q8 0 8 8v26q0 8-8 8H8q-8 0-8-8V16q0-8 8-8Z" fill="#878e90" />
                  <circle cx="26" cy="27" r="11" fill="none" stroke="#fff" strokeWidth="4" />
                </svg>
              </button>
            </PillActions>
          </Pill>
          <MicButton type="button" aria-label="Record voice message">
            <svg width="40" height="54" viewBox="0 0 40 54" fill="none" stroke="#fff" strokeWidth="5">
              <rect x="12" y="0" width="16" height="32" rx="8" fill="#fff" stroke="none" />
              <path d="M3 25c0 23 34 23 34 0M20 42v12" strokeLinecap="butt" />
            </svg>
          </MicButton>
        </Composer>
      </Chat>

      <NavBar>
        <NavButton aria-label="Recent apps">
          <svg width="38" height="40" viewBox="0 0 38 40" fill="#8c8c8c">
            <rect width="5" height="40" rx="2" /><rect x="16" width="5" height="40" rx="2" /><rect x="32" width="5" height="40" rx="2" />
          </svg>
        </NavButton>
        <NavButton aria-label="Home">
          <svg width="42" height="42" viewBox="0 0 42 42" fill="none" stroke="#8c8c8c" strokeWidth="4.600">
            <rect x="2.500" y="2.500" width="37" height="37" rx="11" />
          </svg>
        </NavButton>
        <NavButton aria-label="Back">
          <svg width="24" height="40" viewBox="0 0 24 40" fill="none" stroke="#8c8c8c" strokeWidth="4" strokeLinecap="round">
            <path d="M21 2L3 20l18 18" />
          </svg>
        </NavButton>
      </NavBar>
    </Screen>
  );
}
